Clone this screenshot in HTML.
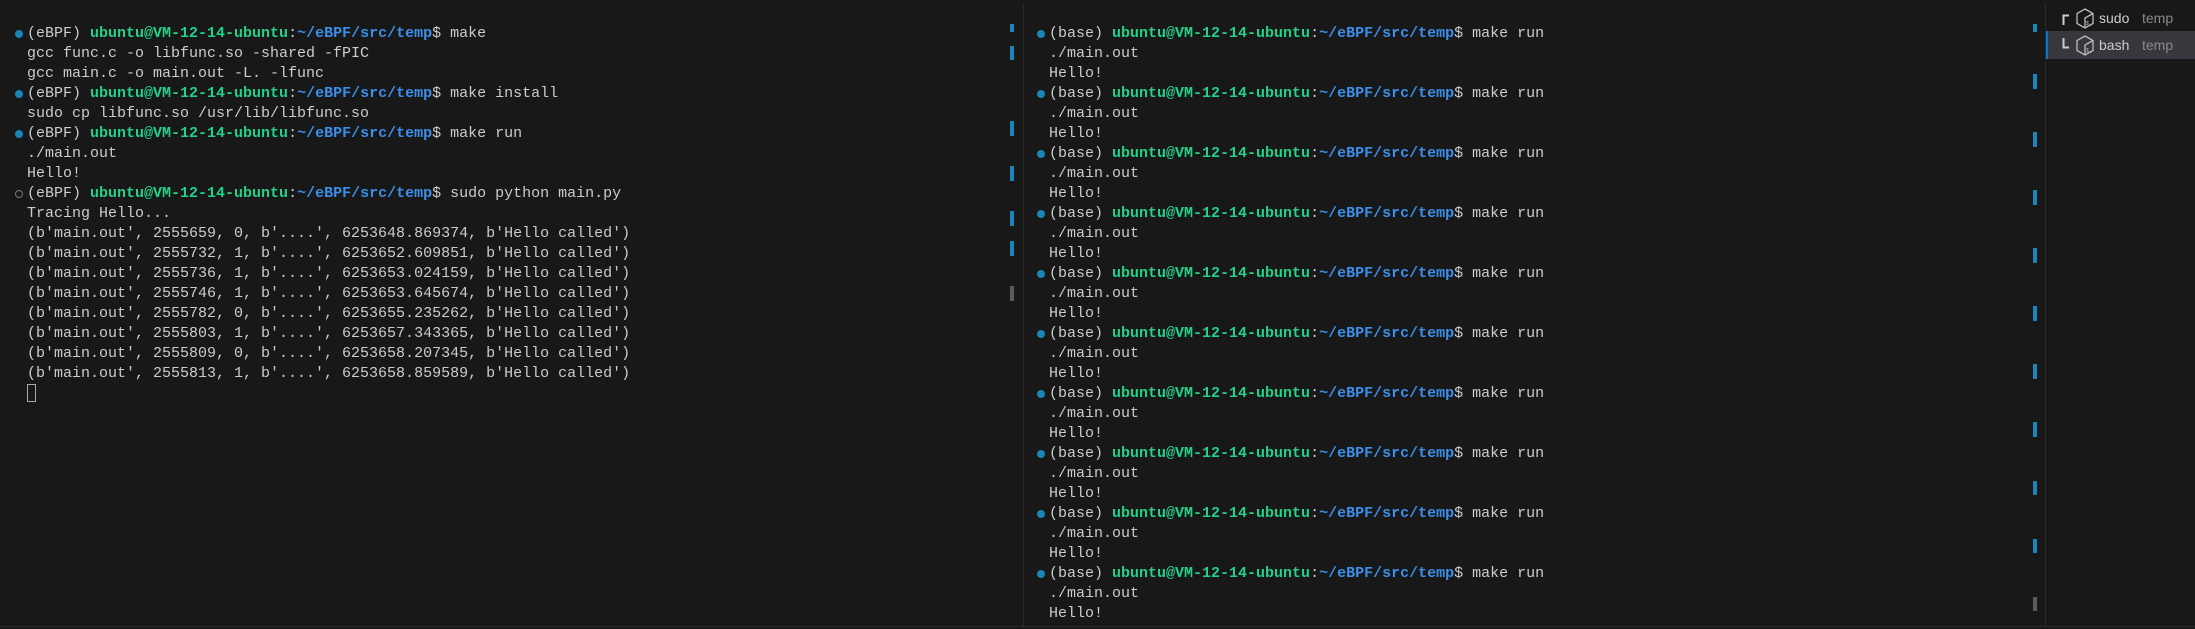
<!DOCTYPE html>
<html><head><meta charset="utf-8"><style>
*{margin:0;padding:0;box-sizing:border-box}
body{width:2195px;height:629px;background:#181818;overflow:hidden;position:relative;font-family:"Liberation Mono",monospace;font-size:15px;color:#cccccc}
.pane{position:absolute;top:24px}
.l{height:20px;line-height:20px;white-space:pre;position:relative}
.g{color:#23d18b;font-weight:bold}
.b{color:#3b8eea;font-weight:bold}
.dot{position:absolute;left:-12px;top:6px;width:8px;height:8px;border-radius:50%;background:#1a85b8}
.dot.o{background:none;border:1.5px solid #777}
.m{position:absolute;width:4px;background:#1a85b8}
.m.gr{background:#5a5a5a}
.side{position:absolute;left:2046px;top:0;width:149px;height:629px;font-family:"Liberation Sans",sans-serif;font-size:14px}
.row{position:absolute;left:0;width:149px;height:28px;line-height:28px}
</style></head><body>
<div style="position:absolute;left:1023px;top:3px;width:1px;height:624px;background:#2b2b2b"></div>
<div style="position:absolute;left:2045px;top:3px;width:1px;height:624px;background:#2b2b2b"></div>
<div style="position:absolute;left:0;top:626px;width:2195px;height:1px;background:#2b2b2b"></div>

<div class="pane" style="left:27px">
<div class="l"><span class="dot"></span>(eBPF) <span class="g">ubuntu@VM-12-14-ubuntu</span>:<span class="b">~/eBPF/src/temp</span>$ make</div>
<div class="l">gcc func.c -o libfunc.so -shared -fPIC</div>
<div class="l">gcc main.c -o main.out -L. -lfunc</div>
<div class="l"><span class="dot"></span>(eBPF) <span class="g">ubuntu@VM-12-14-ubuntu</span>:<span class="b">~/eBPF/src/temp</span>$ make install</div>
<div class="l">sudo cp libfunc.so /usr/lib/libfunc.so</div>
<div class="l"><span class="dot"></span>(eBPF) <span class="g">ubuntu@VM-12-14-ubuntu</span>:<span class="b">~/eBPF/src/temp</span>$ make run</div>
<div class="l">./main.out</div>
<div class="l">Hello!</div>
<div class="l"><span class="dot o"></span>(eBPF) <span class="g">ubuntu@VM-12-14-ubuntu</span>:<span class="b">~/eBPF/src/temp</span>$ sudo python main.py</div>
<div class="l">Tracing Hello...</div>
<div class="l">(b'main.out', 2555659, 0, b'....', 6253648.869374, b'Hello called')</div>
<div class="l">(b'main.out', 2555732, 1, b'....', 6253652.609851, b'Hello called')</div>
<div class="l">(b'main.out', 2555736, 1, b'....', 6253653.024159, b'Hello called')</div>
<div class="l">(b'main.out', 2555746, 1, b'....', 6253653.645674, b'Hello called')</div>
<div class="l">(b'main.out', 2555782, 0, b'....', 6253655.235262, b'Hello called')</div>
<div class="l">(b'main.out', 2555803, 1, b'....', 6253657.343365, b'Hello called')</div>
<div class="l">(b'main.out', 2555809, 0, b'....', 6253658.207345, b'Hello called')</div>
<div class="l">(b'main.out', 2555813, 1, b'....', 6253658.859589, b'Hello called')</div>
<div class="l"><span style="display:inline-block;width:9px;height:18px;border:1px solid #aaa;vertical-align:middle"></span></div>
</div>

<div class="pane" style="left:1049px">
<div class="l"><span class="dot"></span>(base) <span class="g">ubuntu@VM-12-14-ubuntu</span>:<span class="b">~/eBPF/src/temp</span>$ make run</div><div class="l">./main.out</div><div class="l">Hello!</div>
<div class="l"><span class="dot"></span>(base) <span class="g">ubuntu@VM-12-14-ubuntu</span>:<span class="b">~/eBPF/src/temp</span>$ make run</div><div class="l">./main.out</div><div class="l">Hello!</div>
<div class="l"><span class="dot"></span>(base) <span class="g">ubuntu@VM-12-14-ubuntu</span>:<span class="b">~/eBPF/src/temp</span>$ make run</div><div class="l">./main.out</div><div class="l">Hello!</div>
<div class="l"><span class="dot"></span>(base) <span class="g">ubuntu@VM-12-14-ubuntu</span>:<span class="b">~/eBPF/src/temp</span>$ make run</div><div class="l">./main.out</div><div class="l">Hello!</div>
<div class="l"><span class="dot"></span>(base) <span class="g">ubuntu@VM-12-14-ubuntu</span>:<span class="b">~/eBPF/src/temp</span>$ make run</div><div class="l">./main.out</div><div class="l">Hello!</div>
<div class="l"><span class="dot"></span>(base) <span class="g">ubuntu@VM-12-14-ubuntu</span>:<span class="b">~/eBPF/src/temp</span>$ make run</div><div class="l">./main.out</div><div class="l">Hello!</div>
<div class="l"><span class="dot"></span>(base) <span class="g">ubuntu@VM-12-14-ubuntu</span>:<span class="b">~/eBPF/src/temp</span>$ make run</div><div class="l">./main.out</div><div class="l">Hello!</div>
<div class="l"><span class="dot"></span>(base) <span class="g">ubuntu@VM-12-14-ubuntu</span>:<span class="b">~/eBPF/src/temp</span>$ make run</div><div class="l">./main.out</div><div class="l">Hello!</div>
<div class="l"><span class="dot"></span>(base) <span class="g">ubuntu@VM-12-14-ubuntu</span>:<span class="b">~/eBPF/src/temp</span>$ make run</div><div class="l">./main.out</div><div class="l">Hello!</div>
<div class="l"><span class="dot"></span>(base) <span class="g">ubuntu@VM-12-14-ubuntu</span>:<span class="b">~/eBPF/src/temp</span>$ make run</div><div class="l">./main.out</div><div class="l">Hello!</div>
</div>

<!-- left pane overview markers -->
<div class="m" style="left:1010px;top:24px;height:8px"></div>
<div class="m" style="left:1010px;top:46px;height:14px"></div>
<div class="m" style="left:1010px;top:121px;height:15px"></div>
<div class="m" style="left:1010px;top:166px;height:15px"></div>
<div class="m" style="left:1010px;top:211px;height:15px"></div>
<div class="m" style="left:1010px;top:241px;height:15px"></div>
<div class="m gr" style="left:1010px;top:286px;height:15px"></div>
<!-- right pane markers -->
<div class="m" style="left:2033px;top:24px;height:8px"></div>
<div class="m" style="left:2033px;top:74px;height:15px"></div>
<div class="m" style="left:2033px;top:132px;height:15px"></div>
<div class="m" style="left:2033px;top:190px;height:15px"></div>
<div class="m" style="left:2033px;top:248px;height:15px"></div>
<div class="m" style="left:2033px;top:306px;height:15px"></div>
<div class="m" style="left:2033px;top:364px;height:15px"></div>
<div class="m" style="left:2033px;top:422px;height:15px"></div>
<div class="m" style="left:2033px;top:481px;height:14px"></div>
<div class="m" style="left:2033px;top:539px;height:14px"></div>
<div class="m gr" style="left:2033px;top:597px;height:14px"></div>

<div class="side">
 <div class="row" style="top:4px">
  <svg style="position:absolute;left:16px;top:9px" width="8" height="12"><path d="M1.5 12V2.5H7" stroke="#ccc" stroke-width="2" fill="none"/></svg>
  <svg style="position:absolute;left:29px;top:4px" width="20" height="21" viewBox="0 0 20 21"><path d="M10 1L18 5.5V15.5L10 20L2 15.5V5.5Z" stroke="#bbb" stroke-width="1.3" fill="none"/><path d="M10 20V10L18 5.5" stroke="#bbb" stroke-width="1.3" fill="none"/><text x="11" y="17" font-size="5" fill="#bbb" font-family="Liberation Sans">$_</text></svg>
  <span style="position:absolute;left:53px;color:#cccccc">sudo</span>
  <span style="position:absolute;left:96px;color:#8a8a8a">temp</span>
 </div>
 <div class="row" style="top:31px;background:#37373d;border-left:2px solid #0078d4">
  <svg style="position:absolute;left:14px;top:7px" width="8" height="12"><path d="M1.5 0V9.5H7" stroke="#ccc" stroke-width="2" fill="none"/></svg>
  <svg style="position:absolute;left:27px;top:4px" width="20" height="21" viewBox="0 0 20 21"><path d="M10 1L18 5.5V15.5L10 20L2 15.5V5.5Z" stroke="#bbb" stroke-width="1.3" fill="none"/><path d="M10 20V10L18 5.5" stroke="#bbb" stroke-width="1.3" fill="none"/><text x="11" y="17" font-size="5" fill="#bbb" font-family="Liberation Sans">$_</text></svg>
  <span style="position:absolute;left:51px;color:#cccccc">bash</span>
  <span style="position:absolute;left:94px;color:#8a8a8a">temp</span>
 </div>
</div>
</body></html>
